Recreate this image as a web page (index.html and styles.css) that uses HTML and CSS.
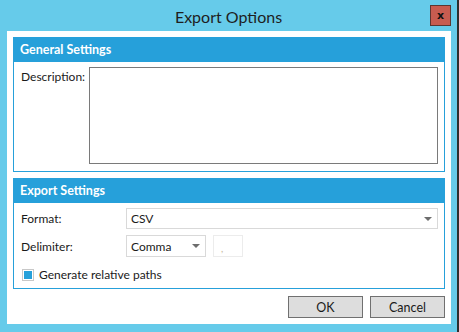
FILE: index.html
```html
<!DOCTYPE html>
<html lang="en">
<head>
  <meta charset="UTF-8">
  <title>Export Options</title>
  <link rel="stylesheet" href="styles.css">
</head>
<body>
  <div class="window">
    <div class="titlebar">
      <span class="title">Export Options</span>
      <button class="close" title="Close">x</button>
    </div>
    <div class="panel">
      <div class="group general">
        <div class="group-header">General Settings</div>
        <div class="group-body desc-row">
          <label class="label">Description:</label>
          <div class="textarea"></div>
        </div>
      </div>
      <div class="group export">
        <div class="group-header">Export Settings</div>
        <div class="group-body">
          <div class="row">
            <label class="label">Format:</label>
            <div class="combo wide">
              <span>CSV</span>
              <span class="arrow"></span>
            </div>
          </div>
          <div class="row">
            <label class="label">Delimiter:</label>
            <div class="combo small">
              <span>Comma</span>
              <span class="arrow"></span>
            </div>
            <div class="textbox">,</div>
          </div>
          <div class="check">
            <span class="box"><span class="tick"></span></span>
            <span>Generate relative paths</span>
          </div>
        </div>
      </div>
      <div class="buttons">
        <button class="button">OK</button>
        <button class="button">Cancel</button>
      </div>
    </div>
  </div>
</body>
</html>
```

FILE: styles.css
```css
* {
  margin: 0;
  padding: 0;
  box-sizing: border-box;
}

body {
  font-family: 'Lato', sans-serif;
  font-size: 12px;
  color: #1a1a1a;
  background: #66cbea;
  width: 459px;
  height: 332px;
  overflow: hidden;
}

.window {
  display: flex;
  flex-direction: column;
  height: 332px;
  border-right: 2px solid #2e2e2e;
}

.titlebar {
  position: relative;
  height: 31px;
  flex-shrink: 0;
  display: flex;
  align-items: center;
  justify-content: center;
}

.title {
  font-size: 16px;
  color: #1e1e1e;
  margin-top: 1px;
}

.close {
  position: absolute;
  top: 5px;
  right: 6px;
  width: 21px;
  height: 21px;
  background: #c75c50;
  border: 1px solid #5c3732;
  font-family: 'DejaVu Sans', sans-serif;
  font-weight: bold;
  font-size: 11px;
  line-height: 16px;
  color: #111;
}

.panel {
  background: #ffffff;
  margin: 0 6px 0 7px;
  padding: 6px;
  display: flex;
  flex-direction: column;
  gap: 6px;
  height: 293px;
}

.group {
  border: 1px solid #26a0da;
}

.general {
  height: 136px;
}

.export {
  height: 111px;
}

.group-header {
  background: #26a0da;
  color: #ffffff;
  font-weight: bold;
  height: 24px;
  line-height: 24px;
  padding-left: 6px;
  font-size: 12.5px;
}

.group-body {
  padding: 5px 6px 7px 7px;
}

.desc-row {
  display: flex;
  gap: 5px;
}

.textarea {
  flex: 1;
  height: 97px;
  border: 1px solid #7a7a7a;
}

.row {
  display: flex;
  align-items: center;
  gap: 7px;
  margin-bottom: 6px;
}

.label {
  width: 98px;
  flex-shrink: 0;
}

.desc-row .label {
  width: 63px;
  margin-top: 2px;
}

.combo {
  display: flex;
  align-items: center;
  justify-content: space-between;
  border: 1px solid #d9d9d9;
  height: 21px;
  padding: 0 5px 0 4px;
  background: #fff;
}

.combo.wide {
  flex: 1;
}

.combo.small {
  width: 80px;
  height: 22px;
}

.arrow {
  width: 0;
  height: 0;
  border-left: 4px solid transparent;
  border-right: 4px solid transparent;
  border-top: 4px solid #6d6d6d;
}

.textbox {
  width: 30px;
  height: 22px;
  border: 1px solid #ececec;
  color: #c8b89a;
  font-size: 10px;
  padding: 6px 0 0 7px;
}

.check {
  display: flex;
  align-items: center;
  gap: 5px;
  margin-top: 10px;
  margin-left: 1px;
}

.box {
  width: 12px;
  height: 12px;
  border: 1px solid #c8c8c8;
  display: flex;
  align-items: center;
  justify-content: center;
}

.tick {
  width: 8px;
  height: 8px;
  background: #26a0da;
}

.buttons {
  display: flex;
  justify-content: flex-end;
  gap: 7px;
  margin-top: 1px;
}

.button {
  width: 75px;
  height: 22px;
  background: #dddddd;
  border: 1px solid #707070;
  font-family: 'Lato', sans-serif;
  font-size: 12.5px;
  color: #1a1a1a;
}
```
